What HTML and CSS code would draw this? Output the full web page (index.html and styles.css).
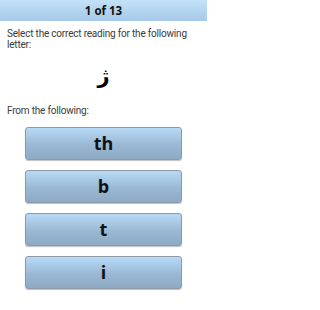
FILE: index.html
```html
<!DOCTYPE html>
<html>
<head>
<meta charset="utf-8">
<link rel="stylesheet" href="styles.css">
</head>
<body>
<div class="header">1 of 13</div>
<div class="content">
  <p class="prompt">Select the correct reading for the following letter:</p>
  <div class="letter">ژ</div>
  <p class="from">From the following:</p>
  <div class="options">
    <button class="opt">th</button>
    <button class="opt">b</button>
    <button class="opt">t</button>
    <button class="opt">i</button>
  </div>
</div>
</body>
</html>
```
FILE: styles.css
```css
html, body {
  margin: 0;
  padding: 0;
  background: #ffffff;
  width: 207px;
  height: 310px;
  overflow: hidden;
  font-family: Roboto, "Open Sans", "DejaVu Sans", sans-serif;
}
.header {
  height: 21px;
  line-height: 22px;
  text-align: center;
  font-family: "Open Sans", "Noto Sans", sans-serif;
  font-weight: bold;
  font-size: 11.5px;
  color: #111;
  background: linear-gradient(to bottom, #c3e1f8, #a6c9e9);
}
.content {
  padding: 0 7px;
}
.prompt {
  margin: 7px 0 0 0;
  font-size: 10px;
  line-height: 11px;
  letter-spacing: -0.2px;
  color: #3a3a3a;
}
.letter {
  margin-top: 12px;
  height: 28px;
  text-align: center;
  font-family: "DejaVu Sans", sans-serif;
  font-weight: bold;
  font-size: 21px;
  line-height: 28px;
  color: #000;
}
.from {
  margin: 15px 0 0 0;
  font-size: 10px;
  line-height: 11px;
  letter-spacing: -0.2px;
  color: #3a3a3a;
}
.options {
  display: flex;
  flex-direction: column;
  gap: 10px;
  margin: 11px 0 0 18px;
}
.opt {
  width: 157px;
  height: 33px;
  padding: 0;
  border: 1px solid #8d9aa6;
  border-radius: 3px;
  background: linear-gradient(to bottom, #b8daf6, #9ab8d4 55%, #8eaac3);
  box-shadow: 0 1px 1px rgba(0,0,0,0.25);
  font-family: "Open Sans", "Noto Sans", "DejaVu Sans", sans-serif;
  font-weight: bold;
  font-size: 18px;
  color: #111;
  line-height: 31px;
}
```
